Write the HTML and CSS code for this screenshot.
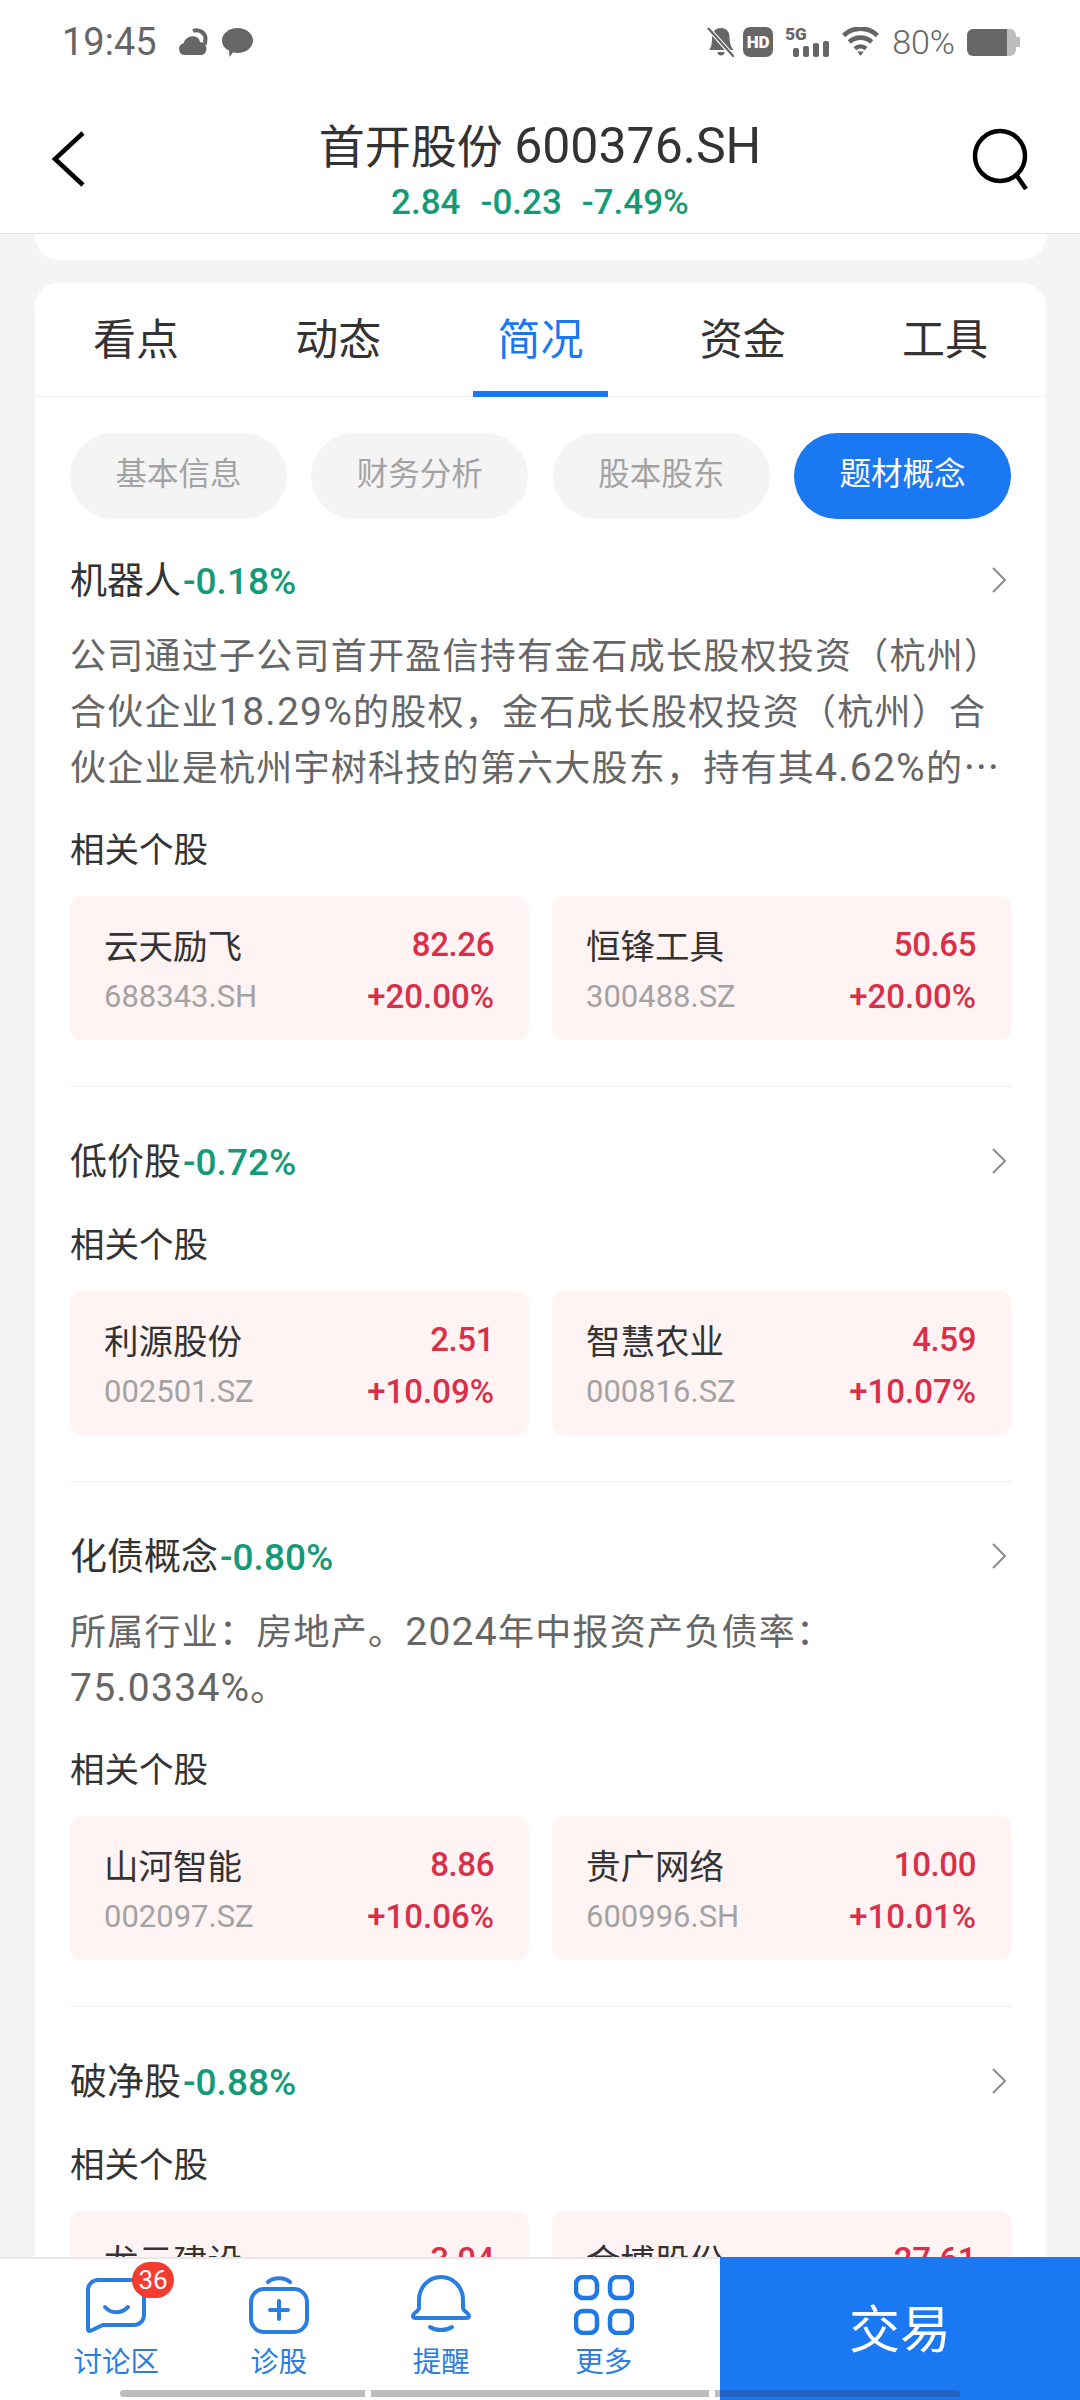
FILE: index.html
```html
<!DOCTYPE html>
<html lang="zh-CN">

<head>
  <meta charset="UTF-8">
  <meta name="viewport" content="width=device-width, initial-scale=1.0">
  <title>首开股份 600376.SH</title>
  <link rel="stylesheet" href="styles.css">
</head>

<body>
  <div class="page">
    <div class="status-bar">
      <div class="status-left">
        <span class="clock">19:45</span>
        <svg class="st-cloud" width="30" height="28" viewBox="0 0 30 28"><path d="M7 27a6 6 0 0 1-1.500-11.800A9.500 9.500 0 0 1 17 8.500a7.500 7.500 0 0 1 5 5.500 6.700 6.700 0 0 1 2 13z" fill="#666"/><path d="M15 3a9 9 0 0 1 12.500 7.500l-.5 6" fill="none" stroke="#666" stroke-width="4"/></svg>
        <svg class="st-bubble" width="31" height="29" viewBox="0 0 31 29"><path d="M15.500 0C24 0 31 5.500 31 12.500S24 25 15.500 25c-1.500 0-3-.2-4.500-.5L7.500 29 7 22.500C2.800 20.500 0 17 0 12.500 0 5.500 7 0 15.500 0z" fill="#666"/></svg>
      </div>
      <div class="status-right">
        <svg class="st-bell" width="27" height="30" viewBox="0 0 27 30"><path d="M14 1c5.500 0 8.500 4 8.500 9 0 6 1.500 10 4 13H2c2-2 3-6 3-13 0-5 3.500-9 9-9zM10.500 25h7a3.500 3.500 0 0 1-7 0z" fill="#666"/><path d="M0 0l27 30" stroke="#fff" stroke-width="4.500"/><path d="M1 1l26 29" stroke="#666" stroke-width="2.200"/></svg>
        <span class="hd">HD</span>
        <div class="signal">
          <span class="five-g">5G</span>
          <div class="bars"><i class="b1"></i><i class="b2"></i><i class="b3"></i><i class="b4"></i></div>
        </div>
        <svg width="39" height="30" viewBox="0 0 40 32"><path d="M2 9a26 26 0 0 1 36 0" fill="none" stroke="#666" stroke-width="5"/><path d="M8 16a18 18 0 0 1 24 0" fill="none" stroke="#666" stroke-width="5"/><path d="M14 23a9 9 0 0 1 12 0" fill="none" stroke="#666" stroke-width="4.500"/><path d="M16.500 26h7L20 31z" fill="#666"/></svg>
        <span class="batt-pct">80%</span>
        <div class="battery"><div class="battery-level"></div><div class="battery-rest"></div><div class="battery-tip"></div></div>
      </div>
    </div>

    <div class="header">
      <svg class="back" width="36" height="56" viewBox="0 0 36 56"><path d="M33 2L5 28l28 26" fill="none" stroke="#000" stroke-width="4.500"/></svg>
      <div class="header-title">
        <div class="stock-title">首开股份 <span class="title-code">600376.SH</span></div>
        <div class="stock-quote"><span>2.84</span><span>-0.23</span><span>-7.49%</span></div>
      </div>
      <svg class="search" width="60" height="62" viewBox="0 0 60 62"><circle cx="30" cy="28" r="25" fill="none" stroke="#000" stroke-width="4.500"/><path d="M47 48l9 13" stroke="#000" stroke-width="4.500"/></svg>
    </div>

    <div class="content">
      <div class="prev-card"></div>

      <div class="card">
        <div class="tabs">
          <div class="tab">看点</div>
          <div class="tab">动态</div>
          <div class="tab active">简况</div>
          <div class="tab">资金</div>
          <div class="tab">工具</div>
        </div>

        <div class="chips">
          <div class="chip">基本信息</div>
          <div class="chip">财务分析</div>
          <div class="chip">股本股东</div>
          <div class="chip active">题材概念</div>
        </div>

        <div class="topic first">
          <div class="topic-head">
            <div class="topic-name">机器人<span class="down">-0.18%</span></div>
            <svg class="chevron" width="16" height="26" viewBox="0 0 16 26"><path d="M2 1l12 12L2 25" fill="none" stroke="#8c8c8c" stroke-width="2"/></svg>
          </div>
          <p class="topic-text">公司通过子公司首开盈信持有金石成长股权投资（杭州）合伙企业<span class="latin">18.29%</span>的股权，金石成长股权投资（杭州）合伙企业是杭州宇树科技的第六大股东，持有其<span class="latin">4.62%</span>的…</p>
          <div class="related">相关个股</div>
          <div class="stocks">
            <div class="stock">
              <div class="stock-row"><span class="name">云天励飞</span><span class="price">82.26</span></div>
              <div class="stock-row"><span class="code">688343.SH</span><span class="pct">+20.00%</span></div>
            </div>
            <div class="stock">
              <div class="stock-row"><span class="name">恒锋工具</span><span class="price">50.65</span></div>
              <div class="stock-row"><span class="code">300488.SZ</span><span class="pct">+20.00%</span></div>
            </div>
          </div>
        </div>

        <div class="topic">
          <div class="topic-head">
            <div class="topic-name">低价股<span class="down">-0.72%</span></div>
            <svg class="chevron" width="16" height="26" viewBox="0 0 16 26"><path d="M2 1l12 12L2 25" fill="none" stroke="#8c8c8c" stroke-width="2"/></svg>
          </div>
          <div class="related">相关个股</div>
          <div class="stocks">
            <div class="stock">
              <div class="stock-row"><span class="name">利源股份</span><span class="price">2.51</span></div>
              <div class="stock-row"><span class="code">002501.SZ</span><span class="pct">+10.09%</span></div>
            </div>
            <div class="stock">
              <div class="stock-row"><span class="name">智慧农业</span><span class="price">4.59</span></div>
              <div class="stock-row"><span class="code">000816.SZ</span><span class="pct">+10.07%</span></div>
            </div>
          </div>
        </div>

        <div class="topic">
          <div class="topic-head">
            <div class="topic-name">化债概念<span class="down">-0.80%</span></div>
            <svg class="chevron" width="16" height="26" viewBox="0 0 16 26"><path d="M2 1l12 12L2 25" fill="none" stroke="#8c8c8c" stroke-width="2"/></svg>
          </div>
          <p class="topic-text">所属行业：房地产。<span class="latin">2024</span>年中报资产负债率：<span class="latin">75.0334%</span>。</p>
          <div class="related">相关个股</div>
          <div class="stocks">
            <div class="stock">
              <div class="stock-row"><span class="name">山河智能</span><span class="price">8.86</span></div>
              <div class="stock-row"><span class="code">002097.SZ</span><span class="pct">+10.06%</span></div>
            </div>
            <div class="stock">
              <div class="stock-row"><span class="name">贵广网络</span><span class="price">10.00</span></div>
              <div class="stock-row"><span class="code">600996.SH</span><span class="pct">+10.01%</span></div>
            </div>
          </div>
        </div>

        <div class="topic">
          <div class="topic-head">
            <div class="topic-name">破净股<span class="down">-0.88%</span></div>
            <svg class="chevron" width="16" height="26" viewBox="0 0 16 26"><path d="M2 1l12 12L2 25" fill="none" stroke="#8c8c8c" stroke-width="2"/></svg>
          </div>
          <div class="related">相关个股</div>
          <div class="stocks">
            <div class="stock">
              <div class="stock-row"><span class="name">龙元建设</span><span class="price">3.04</span></div>
            </div>
            <div class="stock">
              <div class="stock-row"><span class="name">金博股份</span><span class="price">27.61</span></div>
            </div>
          </div>
        </div>
      </div>
    </div>

    <div class="bottom-bar">
      <div class="nav">
        <div class="nav-item">
          <span class="badge">36</span>
          <svg width="62" height="60" viewBox="0 0 62 60"><path d="M13 5h36a10 10 0 0 1 10 10v25a10 10 0 0 1-10 10H18L5 56a2 2 0 0 1-2-2V15A10 10 0 0 1 13 5z" fill="none" stroke="#2a7de1" stroke-width="4"/><path d="M20 32c6 7 16 7 23 0" fill="none" stroke="#2a7de1" stroke-width="4" stroke-linecap="round"/></svg>
          <span class="nav-label">讨论区</span>
        </div>
        <div class="nav-item">
          <svg width="62" height="60" viewBox="0 0 62 60"><rect x="3" y="14" width="56" height="43" rx="13" fill="none" stroke="#2a7de1" stroke-width="4"/><path d="M20 7c6-5 16-5 22 0" fill="none" stroke="#2a7de1" stroke-width="4" stroke-linecap="round"/><path d="M31 26v18M22 35h18" stroke="#2a7de1" stroke-width="4" stroke-linecap="round"/></svg>
          <span class="nav-label">诊股</span>
        </div>
        <div class="nav-item">
          <svg width="60" height="60" viewBox="0 0 60 60"><path d="M8 33V25a22 23 0 0 1 44 0v8c0 3 6 5 6 8 0 2-1 2-3 2H5c-2 0-3 0-3-2 0-3 6-5 6-8z" fill="none" stroke="#2a7de1" stroke-width="4" stroke-linejoin="round"/><path d="M19 52c6 4 16 4 22 0" fill="none" stroke="#2a7de1" stroke-width="4" stroke-linecap="round"/></svg>
          <span class="nav-label">提醒</span>
        </div>
        <div class="nav-item">
          <svg width="60" height="60" viewBox="0 0 60 60"><rect x="2" y="2" width="21" height="21" rx="7" fill="none" stroke="#1e78e6" stroke-width="4.500"/><rect x="36" y="2" width="22" height="21" rx="7" fill="none" stroke="#1e78e6" stroke-width="4.500"/><rect x="2" y="36" width="21" height="22" rx="7" fill="none" stroke="#1e78e6" stroke-width="4.500"/><rect x="36" y="36" width="22" height="22" rx="7" fill="none" stroke="#1e78e6" stroke-width="4.500"/></svg>
          <span class="nav-label">更多</span>
        </div>
      </div>
      <div class="trade">交易</div>
    </div>

    <div class="home-bar">
      <i class="seg1"></i><i class="seg2"></i><i class="seg3"></i>
    </div>
  </div>
</body>

</html>
```

FILE: styles.css
```css
* {
  box-sizing: border-box;
}

body {
  margin: 0;
  font-family: Roboto, "Noto Sans CJK SC", sans-serif;
  background-color: #f4f4f4;
}

.page {
  position: relative;
  display: flex;
  flex-direction: column;
  width: 1080px;
  height: 2400px;
  overflow: hidden;
}

/* barre d'etat */
.status-bar {
  display: flex;
  justify-content: space-between;
  align-items: center;
  height: 84px;
  padding: 0 60px 0 62px;
  background-color: #ffffff;
  color: #666666;
}

.status-left,
.status-right {
  display: flex;
  align-items: center;
}

.clock {
  font-size: 38px;
  margin-right: 21px;
}

.st-cloud {
  margin-right: 14px;
}

.status-right {
  gap: 12px;
}

.st-bell {
  margin-right: -3px;
}

.hd {
  width: 30px;
  height: 30px;
  border-radius: 7px;
  background-color: #666666;
  color: #ffffff;
  font-size: 17px;
  font-weight: 900;
  line-height: 30px;
  text-align: center;
}

.signal {
  display: flex;
  flex-direction: column;
  width: 44px;
  height: 30px;
}

.five-g {
  font-size: 17px;
  font-weight: 900;
  line-height: 14px;
}

.bars {
  display: flex;
  justify-content: flex-end;
  align-items: flex-end;
  gap: 4px;
  height: 16px;
}

.bars i {
  width: 6px;
  border-radius: 2px;
  background-color: #666666;
}

.bars .b1 {
  height: 9px;
}

.bars .b2 {
  height: 11px;
}

.bars .b3 {
  height: 14px;
}

.bars .b4 {
  height: 16px;
}

.batt-pct {
  font-size: 34px;
  font-weight: 300;
}

.battery {
  display: flex;
  align-items: center;
  width: 53px;
  height: 27px;
}

.battery-level {
  width: 40px;
  height: 27px;
  border-radius: 6px 0 0 6px;
  background-color: #666666;
}

.battery-rest {
  width: 9px;
  height: 27px;
  border-radius: 0 6px 6px 0;
  background-color: #bdbdbd;
}

.battery-tip {
  width: 4px;
  height: 10px;
  background-color: #bdbdbd;
}

/* entete */
.header {
  display: flex;
  justify-content: space-between;
  align-items: center;
  height: 150px;
  padding: 0 50px;
  background-color: #ffffff;
  border-bottom: 1px solid #e2e2e2;
}

.back {
  margin-right: 24px;
}

.header-title {
  align-self: flex-start;
  padding-top: 30px;
  text-align: center;
}

.stock-title {
  font-size: 46px;
  line-height: 66px;
  color: #333333;
}

.title-code {
  font-size: 50px;
  line-height: 1;
}

.stock-quote {
  display: flex;
  justify-content: center;
  gap: 20px;
  font-size: 35px;
  font-weight: 500;
  line-height: 46px;
  color: #149a76;
}

.content {
  flex: 1;
  overflow: hidden;
  padding: 0 34px 0 35px;
}

.prev-card {
  height: 26px;
  margin-bottom: 23px;
  border-radius: 0 0 24px 24px;
  background-color: #ffffff;
}

.card {
  padding-bottom: 20px;
  border-radius: 24px 24px 0 0;
  background-color: #ffffff;
}

/* onglets */
.tabs {
  display: flex;
  height: 114px;
  border-bottom: 1px solid #f0f0f0;
}

.tab {
  position: relative;
  flex: 1;
  padding-top: 30px;
  font-size: 43px;
  line-height: 54px;
  text-align: center;
  color: #333333;
}

.tab.active {
  color: #1a78f2;
}

.tab.active::after {
  content: "";
  position: absolute;
  left: 34px;
  right: 34px;
  bottom: -1px;
  height: 6px;
  background-color: #1a78f2;
}

.chips {
  display: flex;
  justify-content: space-between;
  margin: 36px 35px 0;
}

.chip {
  width: 217px;
  height: 86px;
  border-radius: 43px;
  background-color: #f4f4f4;
  color: #a3a3a3;
  font-size: 31.5px;
  line-height: 84px;
  text-align: center;
}

.chip.active {
  background-color: #1a78f2;
  color: #ffffff;
}

/* blocs de themes */
.topic {
  margin: 45px 35px 0;
  padding-bottom: 46px;
  border-bottom: 1px solid #eeeeee;
}

.topic.first {
  margin-top: 32px;
}

.topic:last-child {
  border-bottom: none;
}

.topic-head {
  display: flex;
  justify-content: space-between;
  align-items: center;
  height: 54px;
}

.topic-name {
  font-size: 37px;
  color: #333333;
}

.down {
  color: #149a76;
  font-weight: 500;
  font-size: 37px;
  margin-left: 2px;
}

.chevron {
  margin: 3px 4px 0 0;
}

.topic-text {
  margin: 20px 0 0;
  font-family: "Noto Sans CJK SC", Roboto, sans-serif;
  font-size: 36px;
  letter-spacing: 1.25px;
  line-height: 56px;
  color: #666666;
}

.latin {
  font-family: Roboto, sans-serif;
  font-size: 39px;
  line-height: 1;
}

.related {
  margin-top: 36px;
  font-size: 34.5px;
  line-height: 46px;
  color: #333333;
}

.topic-text + .related {
  margin-top: 34px;
}

.stocks {
  display: flex;
  justify-content: space-between;
  margin-top: 23px;
}

.stock {
  width: 459px;
  height: 144px;
  padding: 22px 35px 0 34px;
  border-radius: 12px;
  background-color: #fff3f3;
}

.stock-row {
  display: flex;
  justify-content: space-between;
  align-items: center;
  height: 52px;
}

.name {
  font-size: 34.5px;
  color: #333333;
}

.code {
  font-size: 31px;
  color: #a3a3a3;
}

.price,
.pct {
  font-size: 33px;
  font-weight: 500;
  color: #d9304a;
}

.price {
  letter-spacing: -0.4px;
}

/* barre du bas */
.bottom-bar {
  display: flex;
  height: 143px;
  background-color: #ffffff;
  border-top: 2px solid #e8e8e8;
}

.nav {
  display: flex;
  width: 720px;
  padding-left: 35px;
}

.nav-item {
  position: relative;
  display: flex;
  flex-direction: column;
  align-items: center;
  width: 162.5px;
  padding-top: 16px;
}

.nav-label {
  margin-top: 10px;
  font-size: 28.5px;
  line-height: 36px;
  color: #2a7de1;
}

.badge {
  position: absolute;
  top: 3px;
  left: 97px;
  width: 42px;
  height: 36px;
  border-radius: 18px;
  background-color: #f43b30;
  color: #ffffff;
  font-size: 26px;
  line-height: 36px;
  text-align: center;
}

.trade {
  flex: 1;
  margin-top: -2px;
  background-color: #1a78f2;
  color: #ffffff;
  font-size: 51px;
  line-height: 148px;
  text-align: center;
}

.home-bar {
  position: absolute;
  left: 120px;
  bottom: 3px;
  display: flex;
  gap: 6px;
  height: 7px;
}

.home-bar i {
  background-color: #bcbcbc;
}

.home-bar .seg1 {
  width: 245px;
  border-radius: 4px 0 0 4px;
}

.home-bar .seg2 {
  width: 338px;
}

.home-bar .seg3 {
  width: 245px;
  border-radius: 0 4px 4px 0;
  background: linear-gradient(to right, #bcbcbc 5px, #2262c2 5px);
}
```
